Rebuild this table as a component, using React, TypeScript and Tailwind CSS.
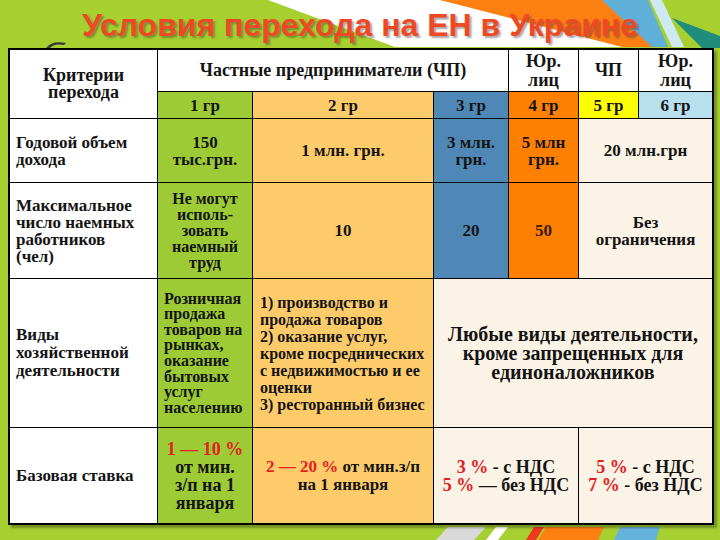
import React from 'react';

const serif = { fontFamily: '"Liberation Serif"' };

const Decor: React.FC = () => (
    <svg className="absolute inset-0 w-full h-full pointer-events-none" viewBox="0 0 720 540">
        {/* top streaks */}
        <polygon points="268,0 440,0 645,47 395,47" fill="#ffffff" />
        <polygon points="440,0 602,0 656,47 622,47" fill="#ff8012" />
        <polygon points="602,0 648,0 668,47 652,47" fill="#5fb0d8" />
        <polygon points="650,0 662,0 684,47 672,47" fill="#cfe9f2" />
        <polygon points="672,18 720,36 720,48 702,48" fill="#1f8c7c" />
        <path d="M46,48 Q52,40 66,43 L64,45 Q54,43 50,48 Z" fill="#3a3a3a" />
        {/* bottom streaks */}
        <polygon points="436,540 448,527 486,527 474,540" fill="#d9d9d9" />
        <polygon points="486,540 496,527 508,527 498,540" fill="#ffffff" />
        <polygon points="526,540 534,527 544,527 536,540" fill="#f0381e" />
        <polygon points="538,540 546,527 604,527 598,540" fill="#ff8012" />
        <polygon points="614,540 620,527 660,527 656,540" fill="#64b3da" />
    </svg>
);

const Cell: React.FC<{ className?: string; text?: string; children: React.ReactNode }> = ({ className = '', text = '', children }) => (
    <div className={`flex items-center ${className}`}>
        <p className={`w-full ${text}`} style={serif}>{children}</p>
    </div>
);

const Red: React.FC<{ children: React.ReactNode }> = ({ children }) => (
    <span className="text-[#e3201f]" style={serif}>{children}</span>
);

const mid = 'text-center';
const lft = 'text-left';
const green = 'bg-[#9ccb36]';
const peach = 'bg-[#fecb6b]';
const blue = 'bg-[#4f88b6]';
const orange = 'bg-[#ff8000]';
const cream = 'bg-[#fbf3e6]';

const App: React.FC = () => {
    return (
        <div className="relative w-[720px] h-[540px] overflow-hidden bg-[#a6cf30]">
            <Decor />

            <div className="relative z-10">
                {/* Title */}
                <div className="h-[48px] flex items-center justify-center pt-[1px]">
                    <h1
                        className="text-[32px] font-bold text-[#ef4824] [text-shadow:2px_2px_2px_rgba(60,60,60,0.45)]"
                        style={{ fontFamily: '"Liberation Sans"' }}
                    >
                        Условия перехода на ЕН в Украине
                    </h1>
                </div>

                {/* Table */}
                <div className="ml-[8px] w-[706px] border-2 border-black bg-black grid gap-px grid-cols-[147px_94px_180px_74px_69px_59px_73px] grid-rows-[41px_26px_63px_95px_148px_95px] shadow-[3px_3px_2px_rgba(0,0,0,0.3)] text-[#141414]">
                    {/* header */}
                    <Cell className="row-span-2 bg-white" text={`${mid} font-bold text-[18px] leading-[17px]`}>Критерии<br />перехода</Cell>
                    <Cell className="col-span-3 bg-white" text={`${mid} font-bold text-[18px] leading-[17px]`}>Частные предприниматели (ЧП)</Cell>
                    <Cell className="bg-white" text={`${mid} font-bold text-[18px] leading-[19px]`}>Юр.<br />лиц</Cell>
                    <Cell className="bg-white" text={`${mid} font-bold text-[18px] leading-[17px]`}>ЧП</Cell>
                    <Cell className="bg-white" text={`${mid} font-bold text-[18px] leading-[19px]`}>Юр.<br />лиц</Cell>

                    <Cell className={green} text={`${mid} font-bold text-[17px] leading-[17px]`}>1 гр</Cell>
                    <Cell className={peach} text={`${mid} font-bold text-[17px] leading-[17px]`}>2 гр</Cell>
                    <Cell className={blue} text={`${mid} font-bold text-[17px] leading-[17px]`}>3 гр</Cell>
                    <Cell className={orange} text={`${mid} font-bold text-[17px] leading-[17px]`}>4 гр</Cell>
                    <Cell className="bg-[#ffff00]" text={`${mid} font-bold text-[17px] leading-[17px]`}>5 гр</Cell>
                    <Cell className="bg-[#b7dfee]" text={`${mid} font-bold text-[17px] leading-[17px]`}>6 гр</Cell>

                    {/* Годовой объем */}
                    <Cell className="bg-white px-[6px]" text={`${lft} font-bold text-[17px] leading-[17px]`}>Годовой объем<br />дохода</Cell>
                    <Cell className={green} text={`${mid} font-bold text-[17px] leading-[17px]`}>150<br />тыс.грн.</Cell>
                    <Cell className={peach} text={`${mid} font-bold text-[17px] leading-[17px]`}>1 млн. грн.</Cell>
                    <Cell className={blue} text={`${mid} font-bold text-[17px] leading-[17px]`}>3 млн.<br />грн.</Cell>
                    <Cell className={orange} text={`${mid} font-bold text-[17px] leading-[17px]`}>5 млн<br />грн.</Cell>
                    <Cell className={`col-span-2 ${cream}`} text={`${mid} font-bold text-[17px] leading-[17px]`}>20 млн.грн</Cell>

                    {/* Максимальное число */}
                    <Cell className="bg-white px-[6px]" text={`${lft} font-bold text-[17px] leading-[17px]`}>Максимальное<br />число наемных<br />работников<br />(чел)</Cell>
                    <Cell className={green} text={`${mid} font-bold text-[16px] leading-[16px]`}>Не могут<br />исполь-<br />зовать<br />наемный<br />труд</Cell>
                    <Cell className={peach} text={`${mid} font-bold text-[17px] leading-[17px]`}>10</Cell>
                    <Cell className={blue} text={`${mid} font-bold text-[17px] leading-[17px]`}>20</Cell>
                    <Cell className={orange} text={`${mid} font-bold text-[17px] leading-[17px] text-[#3a1a00]`}>50</Cell>
                    <Cell className={`col-span-2 ${cream}`} text={`${mid} font-bold text-[17px] leading-[17px]`}>Без<br />ограничения</Cell>

                    {/* Виды деятельности */}
                    <Cell className="bg-white px-[6px]" text={`${lft} font-bold text-[17px] leading-[18px]`}>Виды<br />хозяйственной<br />деятельности</Cell>
                    <Cell className={`${green} px-[6px]`} text={`${lft} font-bold text-[16px] leading-[15.6px]`}>
                        Розничная<br />продажа<br />товаров на<br />рынках,<br />оказание<br />бытовых<br />услуг<br />населению
                    </Cell>
                    <Cell className={`${peach} px-[7px]`} text={`${lft} font-bold text-[16px] leading-[17px]`}>
                        1) производство и<br />продажа товаров<br />
                        2) оказание услуг,<br />кроме посреднических<br />с недвижимостью и ее<br />оценки<br />
                        3) ресторанный бизнес
                    </Cell>
                    <Cell className={`col-span-4 ${cream}`} text={`${mid} font-bold text-[20px] leading-[19px]`}>
                        Любые виды деятельности,<br />кроме запрещенных для<br />единоналожников
                    </Cell>

                    {/* Базовая ставка */}
                    <Cell className="bg-white px-[6px]" text={`${lft} font-bold text-[17px] leading-[17px]`}>Базовая ставка</Cell>
                    <Cell className={green} text={`${mid} font-bold text-[18px] leading-[18px]`}>
                        <Red>1 — 10 %</Red><br />от мин.<br />з/п на 1<br />января
                    </Cell>
                    <Cell className={peach} text={`${mid} font-bold text-[17px] leading-[18px]`}>
                        <Red>2 — 20 %</Red> от мин.з/п<br />на 1 января
                    </Cell>
                    <Cell className={`col-span-2 ${cream}`} text={`${mid} font-bold text-[18px] leading-[18px]`}>
                        <Red>3 %</Red> - с НДС<br /><Red>5 %</Red> — без НДС
                    </Cell>
                    <Cell className={`col-span-2 ${cream}`} text={`${mid} font-bold text-[18px] leading-[18px]`}>
                        <Red>5 %</Red> - с НДС<br /><Red>7 %</Red> - без НДС
                    </Cell>
                </div>
            </div>
        </div>
    );
};

export default App;
